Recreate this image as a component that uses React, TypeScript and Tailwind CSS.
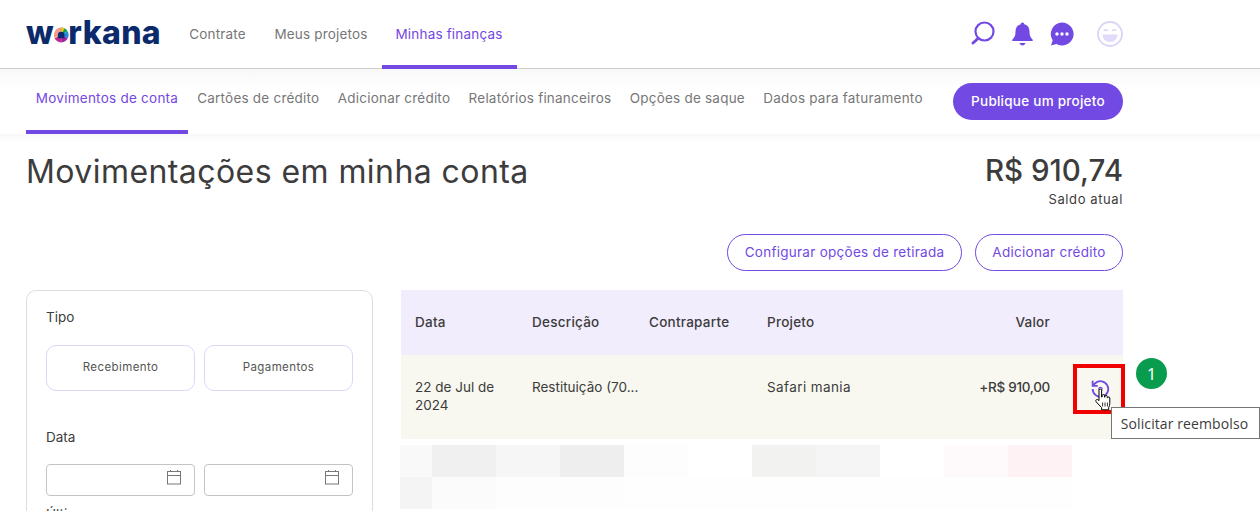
const subTabs = ["Cartões de crédito", "Adicionar crédito", "Relatórios financeiros", "Opções de saque", "Dados para faturamento"];

const Logo = () => (
  <div className="flex items-end w-[135px] h-[24px] text-[#0b2a6b] font-extrabold text-[32px] leading-[24px] tracking-[0.35px] font-['Inter','Liberation_Sans',sans-serif]">
    <span>w</span>
    <svg viewBox="0 0 20 20" className="w-[18px] h-[18px] -mx-[1px] mb-[1px]">
      <path d="M10 10V1a9 9 0 0 1 7.800 4.500z" fill="#12a150" />
      <path d="M10 10l7.800-4.500A9 9 0 0 1 18 14z" fill="#1e88e5" />
      <path d="M10 10l8 4a9 9 0 0 1-8 5z" fill="#a020a0" />
      <path d="M10 10v9a9 9 0 0 1-8-5z" fill="#c02a90" />
      <path d="M10 10l-8 4A9 9 0 0 1 10 1z" fill="#f29a8e" />
      <path d="M10 1a9 9 0 0 1 4 1l-4 8z" fill="#f5c518" />
      <path d="M6 14V10a4 4 0 0 1 8 0v4z" fill="#0b2a6b" />
    </svg>
    <span>rkana</span>
  </div>
);

const CalendarIcon = () => (
  <svg viewBox="0 0 15 15" className="w-[15px] h-[15px]" fill="none" stroke="#777777" strokeWidth="1">
    <rect x="0.500" y="1.500" width="13" height="12.500" />
    <path d="M0.500 5.500h13M3.500 0v2M10.500 0v2" />
  </svg>
);

const HandCursor = () => (
  <svg viewBox="0 0 18 24" className="absolute left-[1094px] top-[388px] w-[18px] h-[24px]">
    <path
      d="M5 2.200c0-1.600 2.600-1.600 2.600 0V9l.6-.2V7.600c0-1.400 2.300-1.400 2.300 0v1.500l.5.1V8.400c0-1.300 2.200-1.300 2.200 0v1.300l.5.1c0-1.200 2.100-1.100 2.100.2v5.500c0 1.600-.5 2.700-1.100 3.900v2.400H7.600v-2.200L2.300 14c-1.400-1.700.5-3.400 2-2l.7.7z"
      fill="#fff"
      stroke="#000"
      strokeWidth="1"
    />
    <path d="M8.600 14.500v4M11 14.500v4M13.400 14.500v4" stroke="#000" strokeWidth="0.8" />
  </svg>
);

const pixelRow1 = ["bg-[#f9f9f9]", "bg-[#f0f0f0]", "bg-[#f6f6f6]", "bg-[#eeeeee]", "bg-[#fdfdfd]", "bg-white", "bg-[#f2f2f0]", "bg-[#f5f5f5]", "bg-white", "bg-[#fefafb]", "bg-[#fef2f5]"];
const pixelRow2 = ["bg-[#f4f4f4]", "bg-[#fbfbfb]", "bg-[#fdfdfd]", "bg-[#fdfdfd]", "bg-[#fefefe]", "bg-[#fefefe]", "bg-[#fefefe]", "bg-[#fefefe]", "bg-[#fefefe]", "bg-[#fefefe]", "bg-[#fefefe]"];

const BlurredRow = ({ cells }: { cells: string[] }) => (
  <div className="grid grid-cols-[32px_repeat(10,64px)] h-[32px]">
    {cells.map((c, i) => (
      <div key={i} className={c} />
    ))}
  </div>
);

export default function App() {
  return (
    <div className="relative w-[1260px] h-[511px] overflow-hidden bg-white text-[#3c3c3c] font-['Inter','Noto_Sans',sans-serif]">
      <header className="flex items-stretch h-[69px] pl-[26px] pr-[137px] border-b border-[#cccccc]">
        <div className="flex items-center -mt-[3px]">
          <Logo />
        </div>
        <nav className="flex ml-[14px] text-[13.5px] tracking-[0.18px]">
          <a className="flex items-center w-[85px] justify-center pt-[1px] text-[#777777]">Contrate</a>
          <a className="flex items-center w-[122px] justify-center pt-[1px] text-[#777777]">Meus projetos</a>
          <a className="flex items-center w-[135px] justify-center pt-[3px] pr-[1px] text-[#7548e2] border-b-4 border-[#7349e3] -mb-[1px]">Minhas finanças</a>
        </nav>
        <div className="ml-auto flex items-center">
          <svg viewBox="0 0 26 26" className="w-[26px] h-[26px]" fill="none" stroke="#7349e3">
            <circle cx="14.500" cy="10.500" r="9" strokeWidth="2.200" />
            <path d="M8 17.500l-5 4.500" strokeWidth="3" strokeLinecap="round" />
          </svg>
          <svg viewBox="2 0 20 26" className="w-[23px] h-[26px] ml-[15px]" fill="#7349e3">
            <path d="M12 1.500c1 0 1.800.8 1.800 1.700 3.700.9 5.200 4 5.200 7.600 0 4 1.200 6 3 7.600.7.7.5 1.600-.5 1.600H2.500c-1 0-1.200-.9-.5-1.600 1.800-1.600 3-3.600 3-7.600 0-3.600 1.500-6.700 5.200-7.600 0-.9.800-1.700 1.800-1.700z" />
            <path d="M9 22h6c-.4 1.600-1.600 2.500-3 2.500S9.400 23.600 9 22z" />
          </svg>
          <svg viewBox="0 0 24 24" className="w-[24px] h-[24px] ml-[16px]">
            <path d="M12 .5a11.500 11.500 0 1 1-5.600 21.500L1 23.500l1.700-5.200A11.500 11.500 0 0 1 12 .5z" fill="#7349e3" />
            <circle cx="7" cy="12" r="1.700" fill="#fff" />
            <circle cx="12" cy="12" r="1.700" fill="#fff" />
            <circle cx="17" cy="12" r="1.700" fill="#fff" />
          </svg>
          <svg viewBox="0 0 26 26" className="w-[26px] h-[26px] ml-[23px]" fill="none">
            <circle cx="13" cy="13" r="12" stroke="#dcd3f8" strokeWidth="1.800" />
            <path d="M5.500 13.500h15c0 4.500-3.300 7.500-7.500 7.500s-7.500-3-7.500-7.500z" fill="#e2dafa" />
            <path d="M7 10c.8-1.700 3-1.700 3.800 0M15.200 10c.8-1.700 3-1.700 3.800 0" stroke="#dcd3f8" strokeWidth="1.500" />
          </svg>
        </div>
      </header>

      <div className="flex items-stretch h-[65px] pl-[26px] pr-[137px] text-[13.5px] tracking-[0.25px] bg-gradient-to-b from-[#f8f8f8] to-white to-30%">
        <a className="flex items-center w-[162px] justify-center pb-[2px] text-[#7548e2] border-b-4 border-[#7349e3]">Movimentos de conta</a>
        {subTabs.map((t) => (
          <a key={t} className="flex items-center px-[9.2px] pb-[6px] text-[#777777] tracking-[0.22px]">
            {t}
          </a>
        ))}
        <button className="ml-auto self-start mt-[14px] w-[170px] h-[37px] rounded-full bg-[#7349e3] text-white font-medium">Publique um projeto</button>
      </div>

      <main className="pl-[26px] pr-[137px] bg-gradient-to-b from-[#f8f8f8] to-white to-[8px]">
        <div className="flex justify-between pt-[18px]">
          <h1 className="pt-[1px] text-[32px] leading-[38px] tracking-[0.43px] font-normal text-[#3c3c3c]">Movimentações em minha conta</h1>
          <div className="-mt-[1px] text-right">
            <div className="text-[29.5px] leading-[38px] font-medium text-[#3c3c3c]">R$ 910,74</div>
            <div className="text-[13px] leading-[18px] mt-[1px] tracking-[0.6px]">Saldo atual</div>
          </div>
        </div>

        <div className="flex justify-end gap-[13px] mt-[26px] text-[13.5px] tracking-[0.27px] text-[#7349e3]">
          <button className="w-[235px] h-[37px] rounded-full border border-[#7349e3]">Configurar opções de retirada</button>
          <button className="w-[148px] h-[37px] rounded-full border border-[#7349e3]">Adicionar crédito</button>
        </div>

        <div className="flex gap-[28px] mt-[19px]">
          <aside className="w-[347px] h-[300px] shrink-0 rounded-[10px] border border-[#dddddd] px-[19px] pt-[17px]">
            <div className="text-[13.5px] leading-[18px]">Tipo</div>
            <div className="grid grid-cols-2 gap-[9px] mt-[19px] text-[11.5px] tracking-[0.4px] text-[#555555]">
              <button className="h-[46px] rounded-[10px] border border-[#ddd6fb]">Recebimento</button>
              <button className="h-[46px] rounded-[10px] border border-[#ddd6fb]">Pagamentos</button>
            </div>
            <div className="text-[13.5px] leading-[18px] mt-[37px]">Data</div>
            <div className="grid grid-cols-2 gap-[9px] mt-[18px]">
              {[0, 1].map((i) => (
                <div key={i} className="flex items-center justify-end h-[32px] pr-[12px] pb-[5px] rounded-[4px] border border-[#c4c4c4]">
                  <CalendarIcon />
                </div>
              ))}
            </div>
            <div className="text-[13.5px] leading-[18px] mt-[9px]">Últimos</div>
          </aside>

          <section className="flex-1 text-[13.5px]">
            <div className="grid grid-cols-[117px_117px_118px_130px_153px_73px] items-center h-[65px] pl-[14px] bg-[#f1edfd] font-medium tracking-[0.25px]">
              <div>Data</div>
              <div>Descrição</div>
              <div>Contraparte</div>
              <div>Projeto</div>
              <div className="text-right">Valor</div>
            </div>
            <div className="grid grid-cols-[117px_117px_118px_130px_153px_73px] items-start h-[84px] pt-[23px] pl-[14px] bg-[#f8f8f0] leading-[18px]">
              <div className="w-[90px]">22 de Jul de 2024</div>
              <div className="whitespace-nowrap">Restituição (70...</div>
              <div />
              <div className="tracking-[0.4px]">Safari mania</div>
              <div className="text-right font-medium tracking-[-0.3px] whitespace-nowrap">+R$ 910,00</div>
            </div>
            <div className="-ml-[1px] mt-[6px]">
              <BlurredRow cells={pixelRow1} />
              <BlurredRow cells={pixelRow2} />
            </div>
          </section>
        </div>
      </main>

      <svg viewBox="0 0 24 24" className="absolute left-[1089px] top-[378px] w-[22px] h-[22px]" fill="none" stroke="#7349e3" strokeWidth="2">
        <path d="M4 12a8.500 8.500 0 1 0 2.800-6.300L4 8.200" />
        <path d="M4 3v5.500h5.500" />
        <circle cx="12.500" cy="12" r="1.800" strokeWidth="1.300" />
      </svg>
      <div className="absolute left-[1073px] top-[364px] w-[52px] h-[50px] border-4 border-[#f00000]" />
      <HandCursor />
      <div className="absolute left-[1136px] top-[358px] flex items-center justify-center w-[31px] h-[31px] rounded-full bg-[#0a9c4e] text-white text-[16px] font-['Noto_Sans',sans-serif]">1</div>
      <div className="absolute left-[1111px] top-[407px] flex items-center justify-center w-[149px] h-[32px] pr-[2px] border border-[#767676] bg-white text-[14px] tracking-[0.1px] text-[#3c3c3c] font-['Open_Sans',sans-serif]">Solicitar reembolso</div>
    </div>
  );
}
